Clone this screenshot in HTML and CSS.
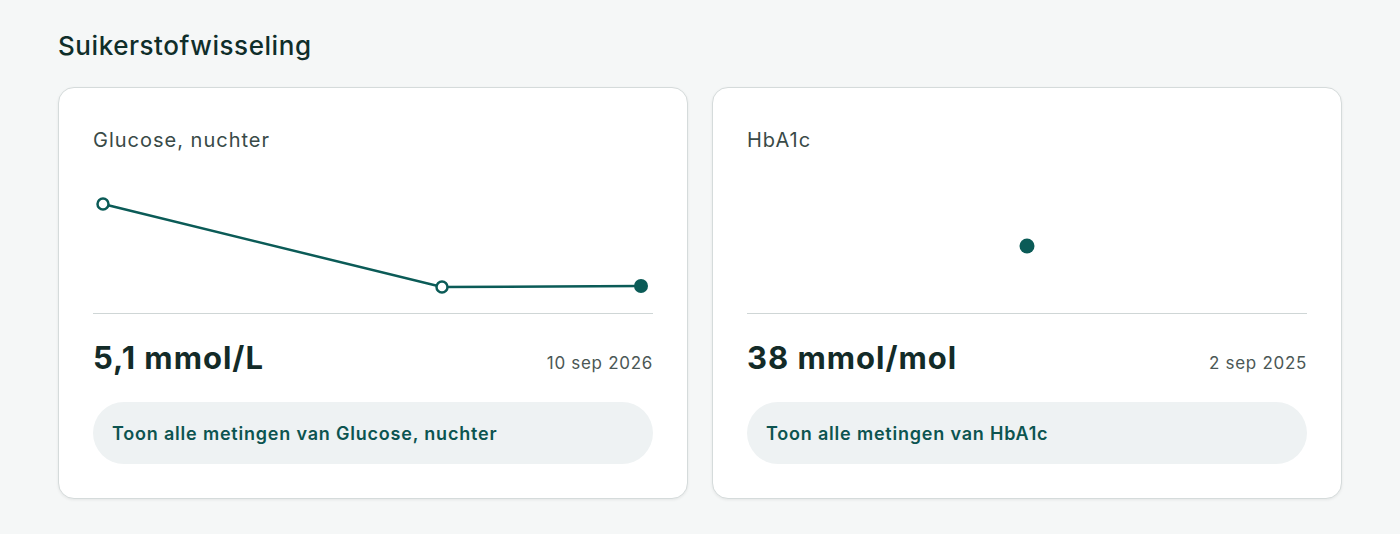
FILE: index.html
```
<!DOCTYPE html>
<html lang="nl">
<head>
<meta charset="utf-8">
<title>Suikerstofwisseling</title>
<link rel="stylesheet" href="styles.css">
</head>
<body>
<main class="page">
  <h2 class="section-title">Suikerstofwisseling</h2>
  <div class="cards">
    <section class="card">
      <h3 class="card-title">Glucose, nuchter</h3>
      <div class="chart">
        <svg class="chart-svg" width="560" height="159" viewBox="0 0 560 159">
          <polyline points="10,50 349,133 548,132" fill="none" stroke="#0b5b57" stroke-width="2.5" />
          <circle cx="10" cy="50" r="5.5" fill="#fff" stroke="#0b5b57" stroke-width="2.5" />
          <circle cx="349" cy="133" r="5.5" fill="#fff" stroke="#0b5b57" stroke-width="2.5" />
          <circle cx="548" cy="132" r="7" fill="#0b5b57" />
        </svg>
      </div>
      <div class="value-row">
        <span class="value">5,1 mmol/L</span>
        <span class="date">10 sep 2026</span>
      </div>
      <a class="show-all" href="#">Toon alle metingen van Glucose, nuchter</a>
    </section>
    <section class="card">
      <h3 class="card-title">HbA1c</h3>
      <div class="chart">
        <svg class="chart-svg" width="560" height="159" viewBox="0 0 560 159">
          <circle cx="280" cy="92" r="7.5" fill="#0b5b57" />
        </svg>
      </div>
      <div class="value-row">
        <span class="value">38 mmol/mol</span>
        <span class="date">2 sep 2025</span>
      </div>
      <a class="show-all" href="#">Toon alle metingen van HbA1c</a>
    </section>
  </div>
</main>
</body>
</html>
```
FILE: styles.css
```
* { box-sizing: border-box; }
html, body { margin: 0; padding: 0; }
body {
  background: #f5f7f7;
  font-family: Inter, "Noto Sans", sans-serif;
  color: #132b28;
}
.page {
  padding: 30px 58px 34px 58px;
}
.section-title {
  margin: 0 0 25px 0;
  font-size: 26px;
  line-height: 32px;
  font-weight: 500;
  color: #0f2e2a;
  letter-spacing: 0.55px;
}
.cards {
  display: grid;
  grid-template-columns: 1fr 1fr;
  gap: 24px;
}
.card {
  background: #fff;
  border: 1px solid #d5dbdb;
  border-radius: 16px;
  box-shadow: 0 1px 3px rgba(0,0,0,0.07);
  padding: 38px 34px 34px 34px;
  height: 412px;
  display: flex;
  flex-direction: column;
}
.card-title {
  margin: 0;
  font-size: 20px;
  line-height: 28px;
  font-weight: 400;
  color: #394a47;
  letter-spacing: 1px;
}
.chart {
  height: 160px;
  border-bottom: 1px solid #cfd6d6;
}
.chart-svg { display: block; }
.value-row {
  display: flex;
  justify-content: space-between;
  align-items: baseline;
  margin-top: 24px;
  height: 40px;
}
.value {
  font-size: 31px;
  line-height: 40px;
  font-weight: 700;
  color: #132b28;
  letter-spacing: 1px;
}
.date {
  font-size: 17px;
  color: #4b5755;
  letter-spacing: 0.7px;
}
.show-all {
  display: flex;
  align-items: center;
  margin-top: 24px;
  height: 62px;
  border-radius: 31px;
  background: #eef2f3;
  padding: 0 19px;
  font-size: 18px;
  font-weight: 600;
  color: #0c5450;
  text-decoration: none;
  letter-spacing: 0.8px;
}
```
